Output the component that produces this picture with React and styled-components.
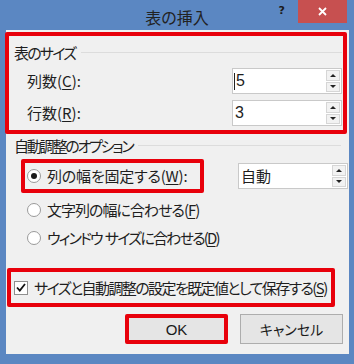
import React from 'react'
import styled, { createGlobalStyle } from 'styled-components'

const Global = createGlobalStyle`
  html, body {
    margin: 0;
    padding: 0;
    background: #5b87c2;
  }
  body {
    font-family: "Noto Sans CJK JP", "Noto Sans", sans-serif;
    font-feature-settings: "palt";
    color: #1e1e1e;
  }
`

const RED = '#e8000b'

const Frame = styled.div`
  width: 354px;
  height: 364px;
  background: #5b87c2;
  display: flex;
  flex-direction: column;
`

const TitleBar = styled.div`
  height: 30px;
  display: grid;
  grid-template-columns: 1fr auto 1fr;
  align-items: start;
`

const Title = styled.div`
  grid-column: 2;
  font-size: 16px;
  line-height: 34px;
  color: #222;
`

const Controls = styled.div`
  grid-column: 3;
  justify-self: end;
  display: flex;
  align-items: flex-start;
  padding-right: 7px;
`

const Help = styled.div`
  font-family: "DejaVu Sans", sans-serif;
  font-weight: bold;
  font-size: 11px;
  line-height: 22px;
  color: #1a1a1a;
  margin-right: 13px;
`

const Close = styled.div`
  width: 49px;
  height: 23px;
  background: #c75050;
  display: flex;
  align-items: center;
  justify-content: center;
`

const Client = styled.div`
  margin: 0 5px 0 6px;
  height: 324px;
  background: #f0f0f0;
  display: flex;
  flex-direction: column;
`

const Highlight = styled.div`
  box-sizing: border-box;
  border: 4px solid ${RED};
  border-radius: 2px;
`

const SizeBox = styled(Highlight)`
  margin: 2px 2px 0 -1px;
  height: 102px;
  padding: 6px 1px 4px 0;
  display: flex;
  flex-direction: column;
`

const Legend = styled.div`
  display: flex;
  align-items: center;
  height: 20px;
  font-size: 15px;
  letter-spacing: ${p => p.$track || 0}px;
  padding-left: ${p => p.$indent}px;
  margin-top: ${p => p.$top || 0}px;

  &::after {
    content: '';
    flex: 1;
    height: 1px;
    background: #dcdcdc;
    margin-left: 6px;
    margin-right: ${p => p.$lineEnd || 0}px;
  }
`

const FieldRow = styled.div`
  display: flex;
  align-items: center;
  justify-content: space-between;
  margin-top: 6px;
  padding-left: 18px;
`

const Label = styled.span`
  font-size: 15px;
  line-height: 20px;
  white-space: nowrap;
  letter-spacing: ${p => p.$track || 0}px;
`

const Key = styled.span`
  text-decoration: underline;
  text-underline-offset: 2px;
`

const Spin = styled.div`
  box-sizing: border-box;
  width: 110px;
  height: 26px;
  background: #fff;
  border: 1px solid #c9c9c9;
  display: flex;
`

const SpinText = styled.div`
  flex: 1;
  font-family: "Liberation Sans", "Noto Sans CJK JP", sans-serif;
  font-size: 16px;
  line-height: 24px;
  padding-left: ${p => (p.$caret ? 1 : 2)}px;
  display: flex;
  align-items: center;
`

const CjkValue = styled.span`
  font-family: "Noto Sans CJK JP", sans-serif;
  font-size: 15px;
`

const Caret = styled.span`
  width: 1px;
  height: 17px;
  background: #222;
  margin-right: 1px;
`

const Arrows = styled.div`
  width: 14px;
  display: flex;
  flex-direction: column;
  padding: 1px 1px 1px 0;
  gap: 1px;
`

const Arrow = styled.div`
  flex: 1;
  background: #f2f2f2;
  border: 1px solid #d6d6d6;
  display: flex;
  align-items: center;
  justify-content: center;

  &::before {
    content: '';
    border-left: 3px solid transparent;
    border-right: 3px solid transparent;
    ${p =>
      p.$down
        ? 'border-top: 3px solid #222;'
        : 'border-bottom: 3px solid #222;'}
  }
`

const Spinner = ({ value, caret, cjk }) => (
  <Spin>
    <SpinText $caret={caret}>
      {caret && <Caret />}
      {cjk ? <CjkValue>{value}</CjkValue> : value}
    </SpinText>
    <Arrows>
      <Arrow />
      <Arrow $down />
    </Arrows>
  </Spin>
)

const OptionRow = styled.div`
  display: flex;
  align-items: center;
  margin-top: 4px;
  padding-right: 1px;
  justify-content: space-between;
`

const RadioBox = styled(Highlight)`
  margin-left: 15px;
  width: 183px;
  height: 34px;
  display: flex;
  align-items: center;
  padding-left: 2px;
`

const RadioLine = styled.div`
  height: 28px;
  display: flex;
  align-items: center;
  padding-left: 21px;
  margin-top: ${p => p.$top || 0}px;
`

const Radio = styled.span`
  box-sizing: border-box;
  width: 14px;
  height: 14px;
  border-radius: 50%;
  border: 1px solid #9a9a9a;
  background: #fff;
  margin-right: 6px;
  display: flex;
  align-items: center;
  justify-content: center;
  flex: none;

  &::after {
    content: '';
    width: 6px;
    height: 6px;
    border-radius: 50%;
    background: ${p => (p.$checked ? '#1a1a1a' : 'transparent')};
  }
`

const SaveBox = styled(Highlight)`
  margin: 16px 0 0 1px;
  width: 328px;
  height: 39px;
  display: flex;
  align-items: center;
  padding-left: 3px;
`

const Check = styled.span`
  box-sizing: border-box;
  width: 14px;
  height: 14px;
  border: 1px solid #8f8f8f;
  background: #fff;
  margin-right: 6px;
  display: flex;
  align-items: center;
  justify-content: center;
  flex: none;
`

const Buttons = styled.div`
  display: flex;
  justify-content: flex-end;
  gap: 12px;
  margin-top: 7px;
  padding-right: 6px;
`

const Button = styled.div`
  box-sizing: border-box;
  width: 103px;
  height: 30px;
  border: ${p => (p.$marked ? `4px solid ${RED}` : '1px solid #adadad')};
  border-radius: ${p => (p.$marked ? 2 : 0)}px;
  background: #e5e5e5;
  display: flex;
  align-items: center;
  justify-content: center;
  font-size: ${p => (p.$latin ? 15 : 14)}px;
  font-family: ${p =>
    p.$latin
      ? '"Liberation Sans", sans-serif'
      : '"Noto Sans CJK JP", sans-serif'};
  color: #1a1a1a;
`

export default function App() {
  return (
    <Frame>
      <Global />
      <TitleBar>
        <Title>表の挿入</Title>
        <Controls>
          <Help>?</Help>
          <Close>
            <svg width="9" height="9" viewBox="0 0 9 9">
              <path d="M1 1L8 8M8 1L1 8" stroke="#fff" strokeWidth="1.8" />
            </svg>
          </Close>
        </Controls>
      </TitleBar>
      <Client>
        <SizeBox>
          <Legend $indent={5} $track={-1.8}>
            表のサイズ
          </Legend>
          <FieldRow>
            <Label>
              列数(<Key>C</Key>):
            </Label>
            <Spinner value="5" caret />
          </FieldRow>
          <FieldRow>
            <Label>
              行数(<Key>R</Key>):
            </Label>
            <Spinner value="3" />
          </FieldRow>
        </SizeBox>

        <Legend $indent={8} $top={1} $lineEnd={8} $track={-2.2}>
          自動調整のオプション
        </Legend>
        <OptionRow>
          <RadioBox>
            <Radio $checked />
            <Label $track={-0.2}>
              列の幅を固定する(<Key>W</Key>):
            </Label>
          </RadioBox>
          <Spinner value="自動" cjk />
        </OptionRow>
        <RadioLine $top={3}>
          <Radio />
          <Label $track={-1}>
            文字列の幅に合わせる(<Key>F</Key>)
          </Label>
        </RadioLine>
        <RadioLine>
          <Radio />
          <Label $track={-1.8}>
            ウィンドウ{'\u00a0\u00a0'}サイズに合わせる(<Key>D</Key>)
          </Label>
        </RadioLine>

        <SaveBox>
          <Check>
            <svg width="10" height="9" viewBox="0 0 10 9">
              <path
                d="M1 4.5L3.8 7.5L9 1"
                fill="none"
                stroke="#111"
                strokeWidth="1.8"
              />
            </svg>
          </Check>
          <Label $track={-1.6}>
            サイズと自動調整の設定を既定値として保存する(<Key>S</Key>)
          </Label>
        </SaveBox>

        <Buttons>
          <Button $marked $latin>
            OK
          </Button>
          <Button>キャンセル</Button>
        </Buttons>
      </Client>
    </Frame>
  )
}
